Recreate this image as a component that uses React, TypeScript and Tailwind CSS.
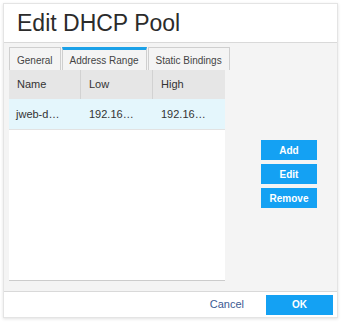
export default function App() {
  const tabs = ["General", "Address Range", "Static Bindings"];
  return (
    <div className="w-[345px] h-[324px] bg-white font-['Liberation_Sans',Arial,sans-serif] pt-[3px] pl-[3px]">
      <div className="w-[335px] h-[315px] flex flex-col border border-[#e4e4e4] shadow-[0_1px_3px_rgba(0,0,0,0.12)] bg-white">
        {/* Header */}
        <div className="h-[39px] flex items-center pl-[13px] border-b border-[#d9d9d9]">
          <h1 className="text-[23px] text-[#2b2b2b] leading-none">Edit DHCP Pool</h1>
        </div>

        {/* Body */}
        <div className="flex-1 bg-[#f4f4f4] pt-[4px] pl-[5px] flex flex-col">
          <div className="flex items-end h-[23px]">
            {tabs.map((t) => {
              const active = t === "Address Range";
              return (
                <div
                  key={t}
                  className={
                    active
                      ? "h-[23px] px-[7px] pt-[1px] mr-px flex items-center border border-[#cfcfcf] border-t-[3px] border-t-[#1ba1e8] border-b-0 bg-[#f4f4f4] text-[10px] text-[#444]"
                      : "h-[23px] px-[7px] pt-[3px] mr-px flex items-center border border-[#cfcfcf] border-b-0 bg-[#f4f4f4] text-[10px] text-[#444]"
                  }
                >
                  {t}
                </div>
              );
            })}
          </div>
          <div className="flex">
            <div className="w-[216px] h-[211px] bg-white border-b border-[#cccccc] flex flex-col">
              <div className="h-[29px] flex bg-[#e6e6e6] text-[11px] text-[#333]">
                <div className="w-[72px] flex items-center pl-[8px] border-r border-[#d2d2d2]">Name</div>
                <div className="w-[72px] flex items-center pl-[8px] border-r border-[#d2d2d2]">Low</div>
                <div className="w-[72px] flex items-center pl-[8px]">High</div>
              </div>
              <div className="h-[31px] flex bg-[#e4f6fc] text-[11px] text-[#333] border-b border-[#e2e2e2]">
                <div className="w-[72px] flex items-center pl-[7px]">jweb-d…</div>
                <div className="w-[72px] flex items-center pl-[8px]">192.16…</div>
                <div className="w-[72px] flex items-center pl-[8px]">192.16…</div>
              </div>
            </div>
            <div className="flex flex-col gap-[4px] ml-[36px] mt-[70px]">
              <button className="w-[56px] h-[20px] bg-[#14a1f3] text-white text-[10px] font-bold">Add</button>
              <button className="w-[56px] h-[20px] bg-[#14a1f3] text-white text-[10px] font-bold">Edit</button>
              <button className="w-[56px] h-[20px] bg-[#14a1f3] text-white text-[10px] font-bold">Remove</button>
            </div>
          </div>
        </div>

        {/* Footer */}
        <div className="h-[26px] border-t border-[#d9d9d9] flex items-center justify-end pr-[4px]">
          <button className="text-[11px] text-[#3c5a92] mr-[22px]">Cancel</button>
          <button className="w-[67px] h-[20px] bg-[#14a1f3] text-white text-[10px] font-bold">OK</button>
        </div>
      </div>
    </div>
  );
}
